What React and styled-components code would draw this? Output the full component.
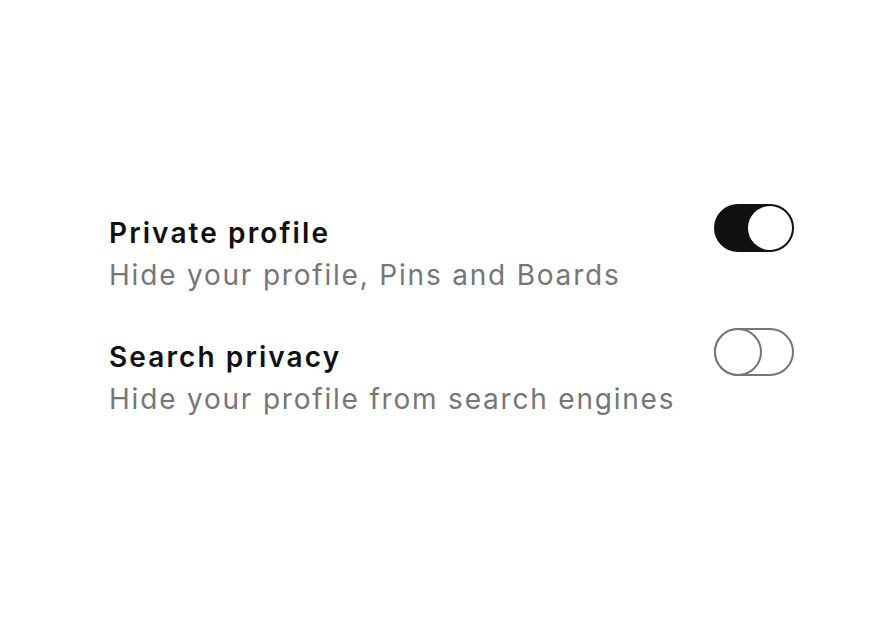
import React, { useState } from "react";
import styled, { createGlobalStyle } from "styled-components";

const GlobalStyle = createGlobalStyle`
  body {
    margin: 0;
    background: #ffffff;
    font-family: Inter, "Noto Sans", sans-serif;
  }
`;

const Page = styled.div`
  width: 874px;
  height: 640px;
  box-sizing: border-box;
  padding: 204px 80px 0 109px;
`;

const List = styled.div`
  width: 685px;
  display: flex;
  flex-direction: column;
  gap: 32px;
`;

const Row = styled.div`
  display: flex;
  justify-content: space-between;
  align-items: flex-start;
`;

const Text = styled.div`
  display: flex;
  flex-direction: column;
  padding-top: 12px;
`;

const Title = styled.div`
  font-size: 28px;
  font-weight: 600;
  color: #111111;
  line-height: 34px;
  letter-spacing: 2.1px;
`;

const Desc = styled.div`
  margin-top: 4px;
  font-size: 28px;
  font-weight: 400;
  color: #767676;
  line-height: 42px;
  letter-spacing: 1.8px;
`;

const Switch = styled.button`
  width: 80px;
  height: 48px;
  box-sizing: border-box;
  padding: 0;
  border-radius: 24px;
  border: 2px solid ${(p) => (p.$on ? "#111111" : "#767676")};
  background: ${(p) => (p.$on ? "#111111" : "#ffffff")};
  display: flex;
  align-items: center;
  justify-content: ${(p) => (p.$on ? "flex-end" : "flex-start")};
  cursor: pointer;
  flex-shrink: 0;
`;

const Knob = styled.span`
  flex-shrink: 0;
  width: ${(p) => (p.$on ? "44px" : "48px")};
  height: ${(p) => (p.$on ? "44px" : "48px")};
  box-sizing: border-box;
  border-radius: 50%;
  background: #ffffff;
  border: ${(p) => (p.$on ? "none" : "2px solid #767676")};
  margin: ${(p) => (p.$on ? "0" : "-2px 0 -2px -2px")};
`;

const settings = [
  { id: "private", title: "Private profile", desc: "Hide your profile, Pins and Boards", on: true },
  { id: "search", title: "Search privacy", desc: "Hide your profile from search engines", on: false },
];

const App = () => {
  const [values, setValues] = useState(
    settings.reduce((acc, s) => ({ ...acc, [s.id]: s.on }), {})
  );

  return (
    <Page>
      <GlobalStyle />
      <List>
        {settings.map((s) => (
          <Row key={s.id}>
            <Text>
              <Title>{s.title}</Title>
              <Desc>{s.desc}</Desc>
            </Text>
            <Switch
              $on={values[s.id]}
              onClick={() => setValues((prev) => ({ ...prev, [s.id]: !prev[s.id] }))}
            >
              <Knob $on={values[s.id]} />
            </Switch>
          </Row>
        ))}
      </List>
    </Page>
  );
};

export default App;
